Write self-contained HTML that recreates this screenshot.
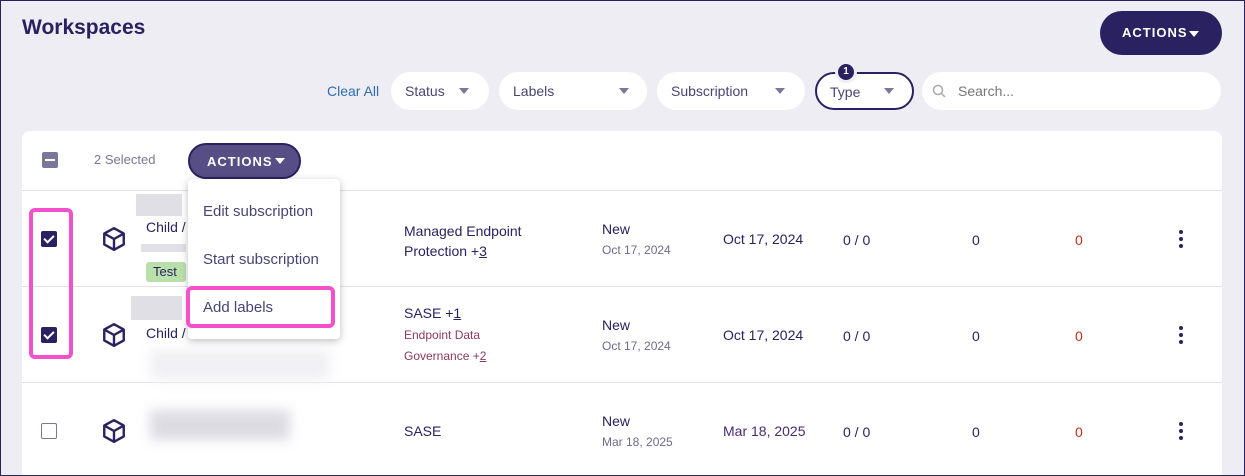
<!DOCTYPE html>
<html><head><style>
*{box-sizing:border-box;margin:0;padding:0}
body{width:1245px;height:476px;overflow:hidden;background:#eeedf3;font-family:"Liberation Sans",sans-serif;color:#2a2160;position:relative}
.frame{position:absolute;left:0;top:0;width:1245px;height:476px;border:1px solid #2a2160;z-index:10;pointer-events:none}
.a{position:absolute;white-space:nowrap}
.pill{position:absolute;background:#fff;border-radius:19px;height:38px;top:72px;font-size:14px;color:#4a4570;padding:11px 14px}
.tri{position:absolute;width:0;height:0;border-left:5px solid transparent;border-right:5px solid transparent;border-top:6px solid #7a7898}
.cb{position:absolute;width:16px;height:16px;border-radius:2px}
.ck{background:#2a2160}
.ck:after{content:"";position:absolute;left:5px;top:2px;width:4px;height:8px;border:solid #fff;border-width:0 2px 2px 0;transform:rotate(45deg)}
.line{position:absolute;left:22px;width:1200px;height:1px;background:#e2e1e8}
.t{font-size:14px;color:#2a2160}
.s{font-size:12px;color:#6e6a88}
.dots{position:absolute;width:4px}
.dots i{display:block;width:4px;height:4px;border-radius:2px;background:#2a2160;margin-bottom:3px}
.blur{position:absolute;background:#dcdbe2;filter:blur(6px)}
</style></head><body>
<div class="frame"></div>
<div class="a" style="left:22px;top:16px;font-size:21px;font-weight:bold;color:#2a2160">Workspaces</div>
<div class="a" style="left:1100px;top:11px;width:122px;height:44px;border-radius:22px;background:#2a2160;color:#fff;font-size:13px;font-weight:bold;letter-spacing:1px;padding:14px 0 0 22px">ACTIONS</div>
<div class="tri" style="left:1189px;top:31px;border-top-color:#fff"></div>

<div class="a" style="left:327px;top:83px;font-size:14px;color:#2e6db0">Clear All</div>
<div class="pill" style="left:391px;width:98px">Status</div><div class="tri" style="left:459px;top:88px"></div>
<div class="pill" style="left:499px;width:148px">Labels</div><div class="tri" style="left:619px;top:88px"></div>
<div class="pill" style="left:657px;width:148px">Subscription</div><div class="tri" style="left:775px;top:88px"></div>
<div class="pill" style="left:815px;width:99px;border:2px solid #2a2160;padding:10px 13px">Type</div><div class="tri" style="left:884px;top:88px"></div>
<div class="a" style="left:838px;top:64px;width:16px;height:16px;border-radius:8px;background:#2a2160;color:#fff;font-size:10px;font-weight:bold;text-align:center;line-height:16px;box-shadow:0 0 0 3px #eeedf3">1</div>
<div class="pill" style="left:922px;width:299px;color:#777;padding-left:36px">Search...</div>
<svg class="a" style="left:932px;top:84px" width="14" height="14"><circle cx="6" cy="6" r="4.5" fill="none" stroke="#aaa" stroke-width="1.5"/><path d="M9.5 9.5L13 13" stroke="#aaa" stroke-width="1.5"/></svg>

<div class="a" style="left:22px;top:131px;width:1200px;height:345px;background:#fff;border-radius:8px 8px 0 0"></div>
<div class="line" style="top:190px"></div>
<div class="line" style="top:286px"></div>
<div class="line" style="top:382px"></div>

<div class="cb" style="left:42px;top:152px;background:#7a7898"><div style="position:absolute;left:3px;top:7px;width:10px;height:2px;background:#fff"></div></div>
<div class="a" style="left:94px;top:152px;font-size:13px;color:#7a7898">2 Selected</div>
<div class="a" style="left:188px;top:143px;width:113px;height:36px;border-radius:18px;background:#564e84;border:2px solid #2a2160;color:#fff;font-size:13px;font-weight:bold;letter-spacing:1px;padding:9px 0 0 17px">ACTIONS</div>
<div class="tri" style="left:275px;top:158px;border-top-color:#fff"></div>

<div class="a" style="left:29px;top:208px;width:44px;height:151px;border:4px solid #f550cc;border-radius:6px"></div>
<div class="cb ck" style="left:41px;top:231px"></div>
<div class="cb ck" style="left:41px;top:327px"></div>
<div class="cb" style="left:41px;top:423px;border:1px solid #7a7898"></div>

<svg class="a" style="left:101px;top:226px" width="26" height="26" viewBox="0 0 24 24" fill="none" stroke="#2a2160" stroke-width="2.2" stroke-linejoin="round"><path d="M12 2L21 7V17L12 22L3 17V7Z"/><path d="M3 7L12 12L21 7M12 12V22"/></svg>
<svg class="a" style="left:101px;top:322px" width="26" height="26" viewBox="0 0 24 24" fill="none" stroke="#2a2160" stroke-width="2.2" stroke-linejoin="round"><path d="M12 2L21 7V17L12 22L3 17V7Z"/><path d="M3 7L12 12L21 7M12 12V22"/></svg>
<svg class="a" style="left:101px;top:418px" width="26" height="26" viewBox="0 0 24 24" fill="none" stroke="#2a2160" stroke-width="2.2" stroke-linejoin="round"><path d="M12 2L21 7V17L12 22L3 17V7Z"/><path d="M3 7L12 12L21 7M12 12V22"/></svg>

<div class="a" style="left:136px;top:194px;width:46px;height:22px;background:#e0dfe6"></div>
<div class="a t" style="left:146px;top:219px">Child /</div>
<div class="a" style="left:141px;top:244px;width:45px;height:8px;background:#e0dfe6"></div>
<div class="a" style="left:146px;top:262px;width:40px;height:20px;background:#b9e0ab;border-radius:3px;font-size:13px;padding:2px 0 0 7px;color:#2a2160">Test</div>
<div class="a" style="left:131px;top:296px;width:51px;height:24px;background:#e0dfe6"></div>
<div class="a t" style="left:146px;top:325px">Child /</div>
<div class="blur" style="left:150px;top:350px;width:180px;height:30px;background:#f0f0f3"></div>
<div class="blur" style="left:150px;top:410px;width:140px;height:30px"></div>

<div class="a" style="left:188px;top:179px;width:152px;height:160px;background:#fff;border-radius:4px;box-shadow:0 2px 8px rgba(0,0,0,.25)"></div>
<div class="a" style="left:203px;top:203px;font-size:15px;color:#4a4570">Edit subscription</div>
<div class="a" style="left:203px;top:251px;font-size:15px;color:#4a4570">Start subscription</div>
<div class="a" style="left:186px;top:286px;width:149px;height:42px;border:4px solid #f550cc;border-radius:6px"></div>
<div class="a" style="left:203px;top:299px;font-size:15px;color:#4a4570">Add labels</div>

<div class="a t" style="left:404px;top:221px;line-height:20px">Managed Endpoint<br>Protection +<u>3</u></div>
<div class="a t" style="left:404px;top:305px">SASE +<u>1</u></div>
<div class="a" style="left:404px;top:325px;font-size:12px;color:#8a3a5a;line-height:21px">Endpoint Data<br>Governance +<u>2</u></div>
<div class="a t" style="left:404px;top:423px">SASE</div>

<div class="a t" style="left:602px;top:221px">New</div><div class="a s" style="left:602px;top:243px">Oct 17, 2024</div>
<div class="a t" style="left:602px;top:317px">New</div><div class="a s" style="left:602px;top:339px">Oct 17, 2024</div>
<div class="a t" style="left:602px;top:413px">New</div><div class="a s" style="left:602px;top:435px">Mar 18, 2025</div>

<div class="a t" style="left:723px;top:231px">Oct 17, 2024</div>
<div class="a t" style="left:723px;top:327px">Oct 17, 2024</div>
<div class="a t" style="left:723px;top:423px;color:#4a2a70">Mar 18, 2025</div>
<div class="a t" style="left:843px;top:232px">0 / 0</div><div class="a t" style="left:843px;top:328px">0 / 0</div><div class="a t" style="left:843px;top:424px">0 / 0</div>
<div class="a t" style="left:972px;top:232px">0</div><div class="a t" style="left:972px;top:328px">0</div><div class="a t" style="left:972px;top:424px">0</div>
<div class="a t" style="left:1075px;top:232px;color:#c0311e">0</div><div class="a t" style="left:1075px;top:328px;color:#c0311e">0</div><div class="a t" style="left:1075px;top:424px;color:#c0311e">0</div>
<div class="dots" style="left:1179px;top:230px"><i></i><i></i><i></i></div>
<div class="dots" style="left:1179px;top:326px"><i></i><i></i><i></i></div>
<div class="dots" style="left:1179px;top:422px"><i></i><i></i><i></i></div>
</body></html>
